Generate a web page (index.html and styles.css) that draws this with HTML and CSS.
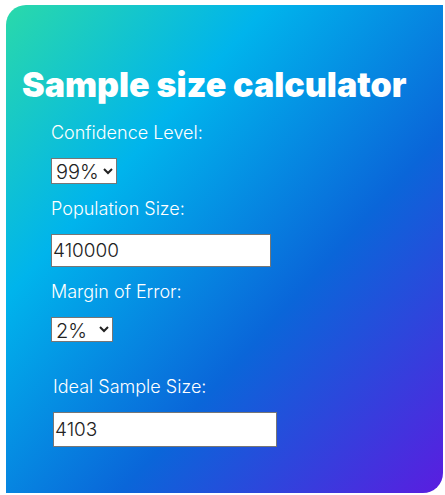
FILE: index.html
```html
<!DOCTYPE html>
<html lang="en">
<head>
    <meta charset="UTF-8">
    <meta name="viewport" content="width=device-width, initial-scale=1.0">
    <title>Sample size calculator</title>
    <link rel="stylesheet" href="styles.css">
</head>
<body>
    <div class="card">
        <h1>Sample size calculator</h1>

        <form class="calc-form">
            <div class="field">
                <label for="confidence">Confidence Level:</label>
                <select id="confidence" class="select-confidence">
                    <option>90%</option>
                    <option>95%</option>
                    <option selected>99%</option>
                </select>
            </div>

            <div class="field">
                <label for="population">Population Size:</label>
                <input type="text" id="population" class="text-input" value="410000">
            </div>

            <div class="field">
                <label for="error">Margin of Error:</label>
                <select id="error" class="select-error">
                    <option>1%</option>
                    <option selected>2%</option>
                    <option>5%</option>
                </select>
            </div>
        </form>

        <!-- Result -->
        <div class="result">
            <label for="sample">Ideal Sample Size:</label>
            <input type="text" id="sample" class="text-input result-input" value="4103" readonly>
        </div>
    </div>
</body>
</html>
```

FILE: styles.css
```css
body {
    margin: 0;
    padding: 5px 2px 2px 6px;
    font-family: Inter, "Liberation Sans", sans-serif;
    background-color: #fff;
}

.card {
    width: 437px;
    height: 488px;
    box-sizing: border-box;
    padding: 60px 16px 0 16px;
    border-radius: 20px 0 20px 0;
    background: linear-gradient(to bottom right, #2ad9aa 0%, #00b4ec 30%, #0a66d9 63%, #5a1de0 100%);
    color: #fff;
}

h1 {
    margin: 0;
    font-family: Inter, sans-serif;
    font-weight: 900;
    font-size: 34px;
    line-height: 40px;
    letter-spacing: 0;
}

.calc-form {
    margin: 17px 0 0 29px;
}

.field {
    display: flex;
    flex-direction: column;
    align-items: flex-start;
    gap: 14px;
    margin-bottom: 14px;
}

label {
    font-size: 18px;
    line-height: 22px;
    font-weight: 300;
}

select {
    height: 26px;
    padding: 0;
    font-family: Inter, sans-serif;
    font-weight: 300;
    font-size: 20px;
    color: #222;
    background-color: #fff;
    border: 1px solid #767676;
    border-radius: 0;
}

.select-confidence {
    width: 66px;
}

.select-error {
    width: 62px;
    height: 25px;
}

.text-input {
    width: 220px;
    height: 33px;
    box-sizing: border-box;
    padding: 1px;
    font-family: Inter, sans-serif;
    font-weight: 300;
    font-size: 19px;
    color: #222;
    background-color: #fff;
    border: 1px solid #767676;
    border-radius: 0;
}

.result {
    display: flex;
    flex-direction: column;
    align-items: flex-start;
    gap: 14px;
    margin: 34px 0 0 31px;
}

.result-input {
    width: 224px;
    height: 35px;
}
```
